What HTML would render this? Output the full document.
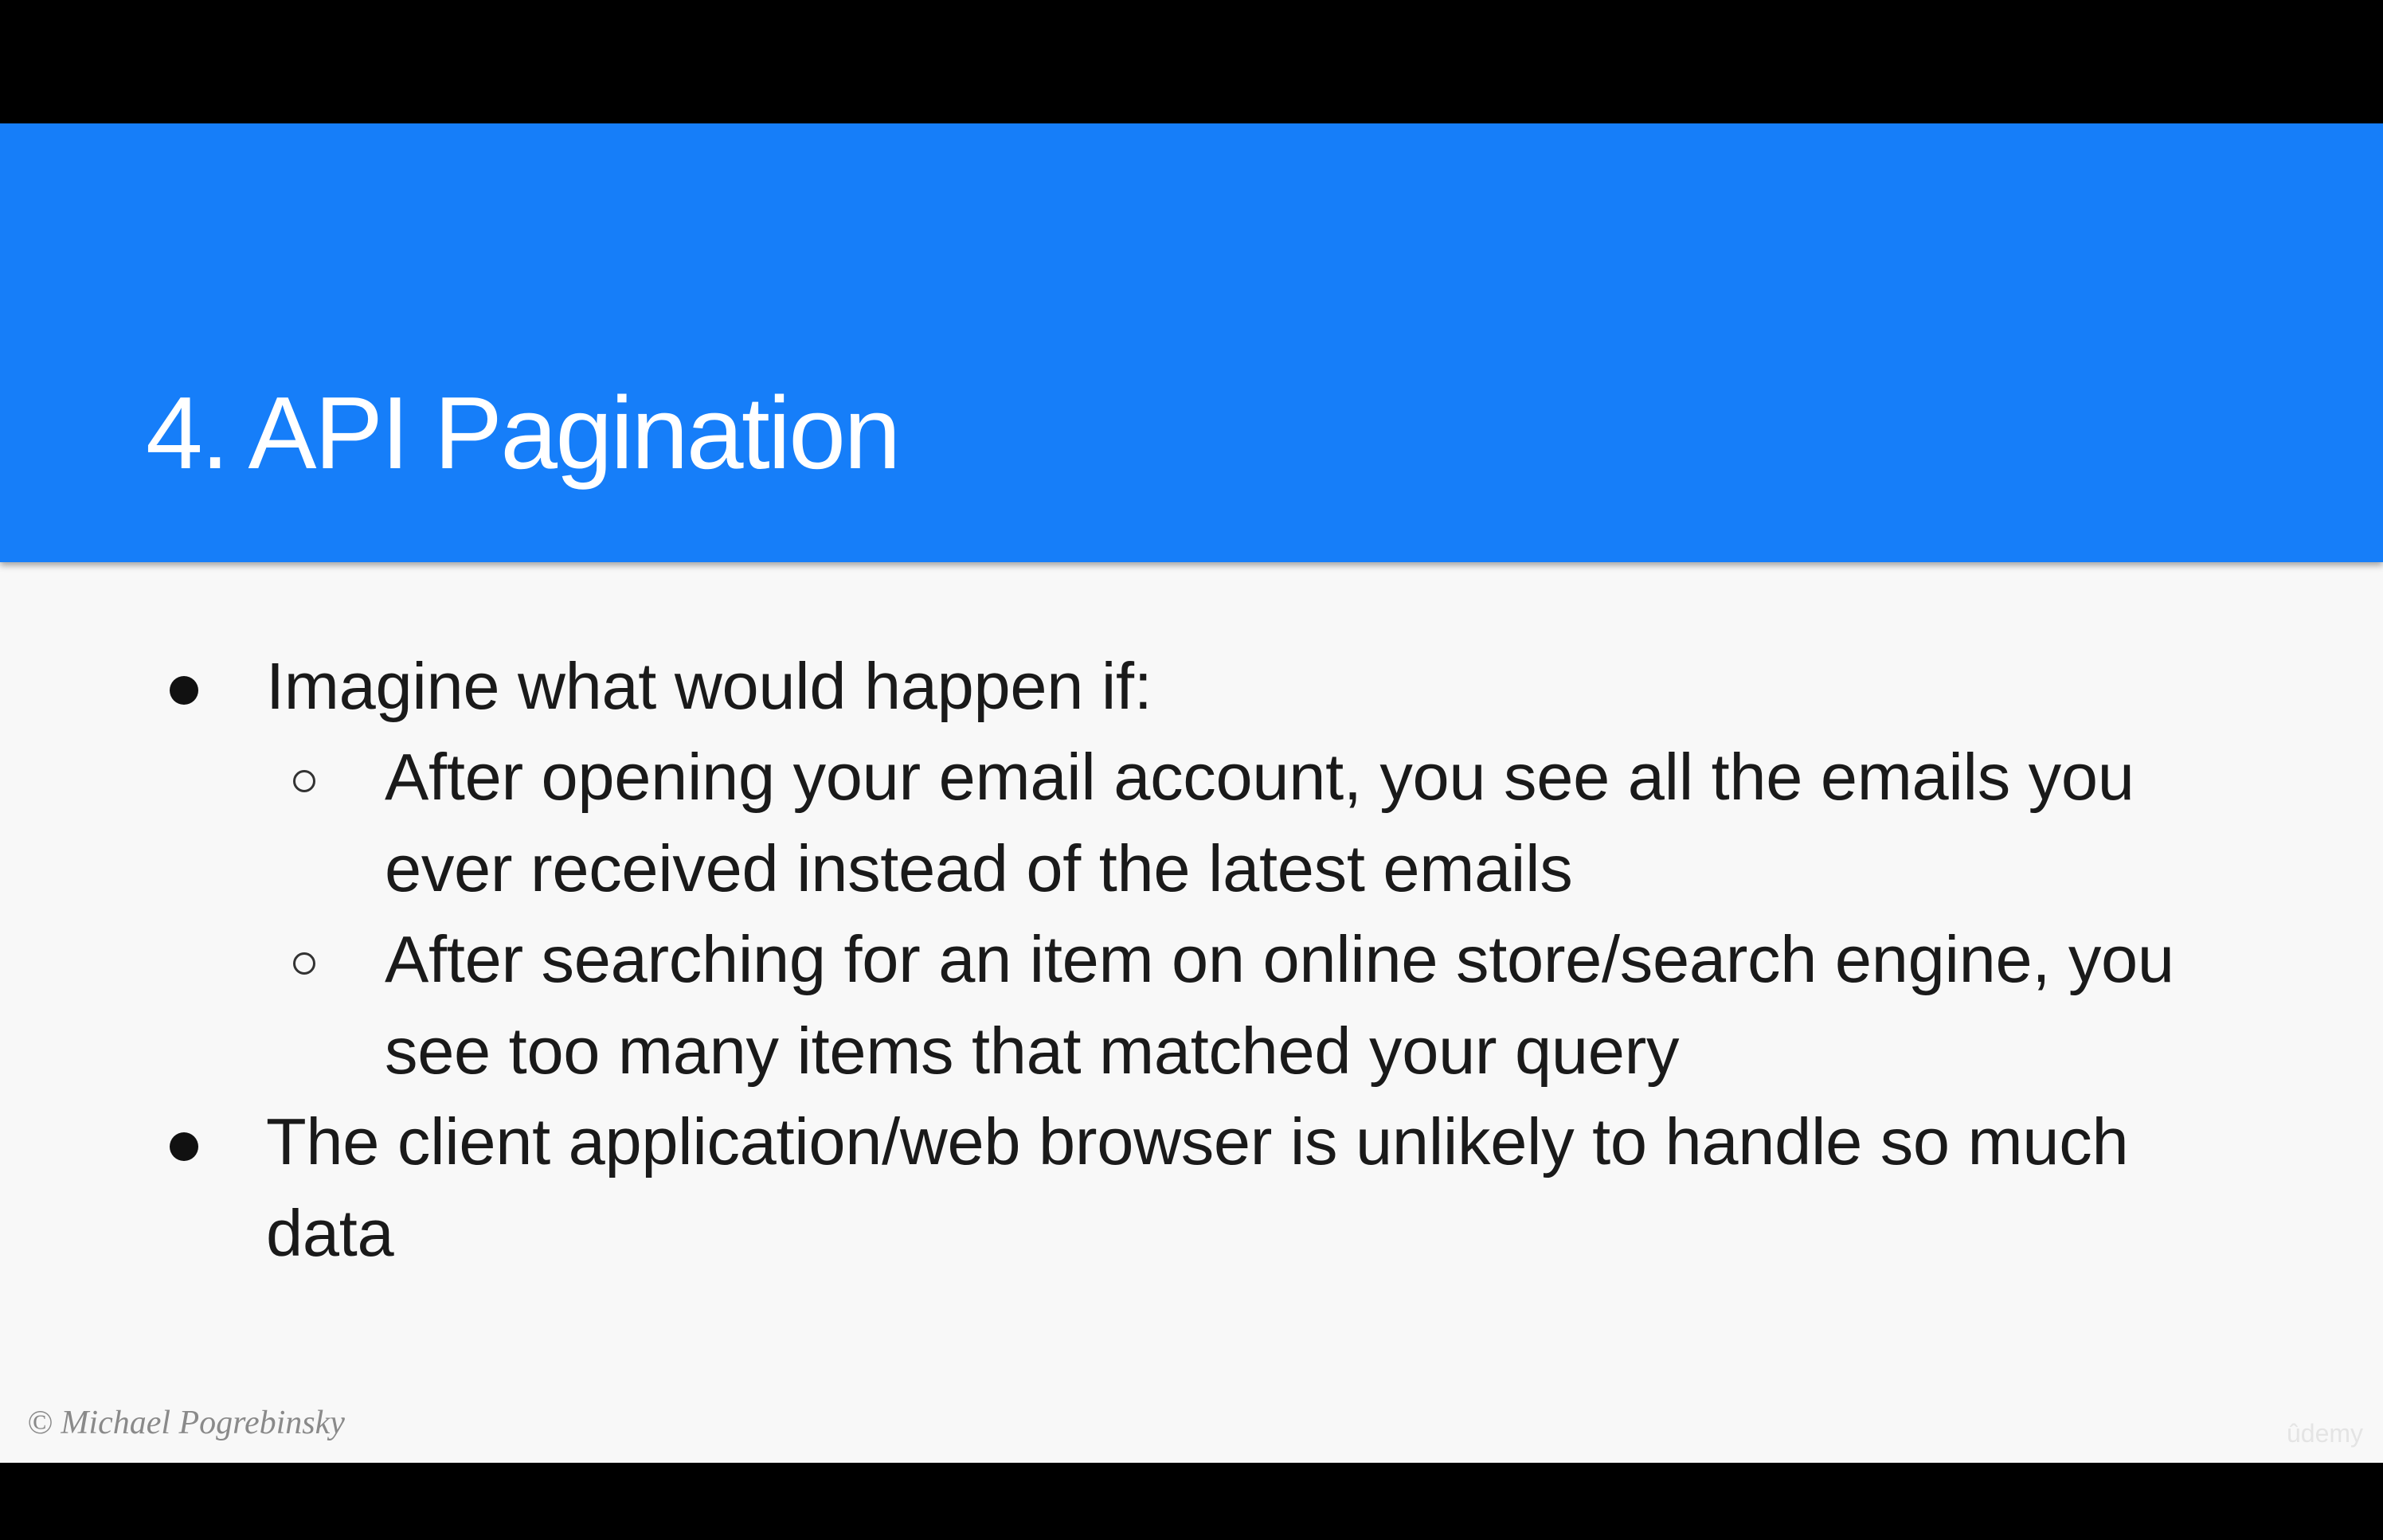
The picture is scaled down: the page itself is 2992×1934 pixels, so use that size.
<!DOCTYPE html>
<html><head><meta charset="utf-8"><style>
html,body{margin:0;padding:0;width:2992px;height:1934px;background:#000;overflow:hidden;font-family:"Liberation Sans",sans-serif}
.slide{position:absolute;left:0;top:155px;width:2992px;height:1682px;background:#f8f8f8}
.hdr{position:absolute;left:0;top:0;width:2992px;height:551px;background:#167ef9;box-shadow:0 4px 8px rgba(0,0,0,.35)}
.t{position:absolute;white-space:nowrap;line-height:1}
.title{left:183px;top:325px;font-size:129px;letter-spacing:-2.6px;color:#fff}
.b{font-size:83px;letter-spacing:-0.3px;color:#1a1a1a}
.dot{position:absolute;width:36px;height:36px;border-radius:50%;background:#111}
.circ{position:absolute;width:28px;height:28px;border-radius:50%;border:3px solid #333;box-sizing:border-box}
</style></head><body>
<div class="slide">
<div class="hdr"><div class="t title">4. API Pagination</div></div>
</div>
<div class="dot" style="left:213px;top:849px"></div>
<div class="t b" style="left:334px;top:820px">Imagine what would happen if:</div>
<div class="circ" style="left:368px;top:967px"></div>
<div class="t b" style="left:483px;top:934px">After opening your email account, you see all the emails you</div>
<div class="t b" style="left:483px;top:1049px">ever received instead of the latest emails</div>
<div class="circ" style="left:368px;top:1196px"></div>
<div class="t b" style="left:483px;top:1163px">After searching for an item on online store/search engine, you</div>
<div class="t b" style="left:483px;top:1278px">see too many items that matched your query</div>
<div class="dot" style="left:213px;top:1422px"></div>
<div class="t b" style="left:334px;top:1392px">The client application/web browser is unlikely to handle so much</div>
<div class="t b" style="left:334px;top:1507px">data</div>
<div class="t" style="left:34px;top:1766px;font-family:'Liberation Serif',serif;font-style:italic;font-size:42px;color:#8a8a8a">© Michael Pogrebinsky</div>
<div class="t" style="left:2871px;top:1784px;font-size:32px;color:#e4e4e4">ûdemy</div>
</body></html>
